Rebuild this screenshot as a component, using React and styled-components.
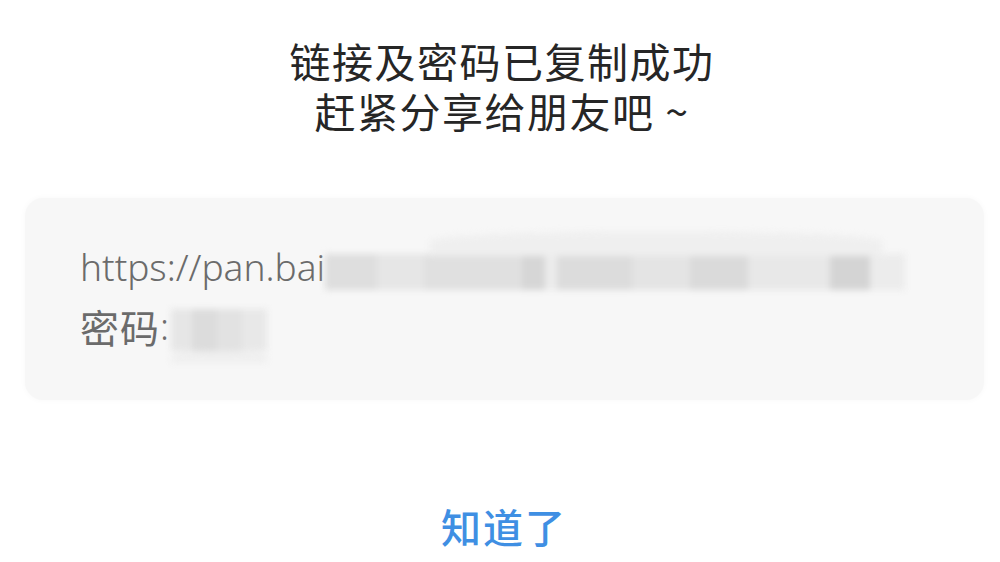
import React from "react";
import styled, { createGlobalStyle } from "styled-components";

const GlobalStyle = createGlobalStyle`
  html, body {
    margin: 0;
    padding: 0;
    background: #fff;
  }
  body {
    font-family: "Noto Sans CJK SC", "Noto Sans", sans-serif;
  }
`;

const App = () => {
  return (
    <Page>
      <GlobalStyle />
      <Title>
        <TitleLine>链接及密码已复制成功</TitleLine>
        <TitleLine>赶紧分享给朋友吧 ~</TitleLine>
      </Title>
      <Card>
        <Line>
          https://pan.bai
          <Redacted $w={580} $h={36} />
        </Line>
        <Line>
          <Cjk>密码</Cjk>:
          <Redacted $w={96} $h={42} $short />
        </Line>
      </Card>
      <OkButton>知道了</OkButton>
    </Page>
  );
};

export default App;

const Page = styled.div`
  width: 1000px;
  height: 562px;
  display: flex;
  flex-direction: column;
  align-items: center;
  padding-top: 35px;
  box-sizing: border-box;
  overflow: hidden;
  background: #fff;
`;

const Title = styled.div`
  display: flex;
  flex-direction: column;
  align-items: center;
  color: #262626;
`;

const TitleLine = styled.div`
  font-size: 41px;
  line-height: 50px;
  font-weight: 400;
  letter-spacing: 1.5px;
  padding-left: 4px;
  white-space: nowrap;
`;

const Card = styled.div`
  align-self: stretch;
  margin: 63px 16px 0 25px;
  height: 202px;
  box-sizing: border-box;
  padding: 39px 55px 0;
  background: #f7f7f7;
  border-radius: 18px;
  box-shadow: 0 0 6px rgba(0, 0, 0, 0.03);
`;

const Line = styled.div`
  display: flex;
  align-items: center;
  height: 59px;
  font-size: 37px;
  font-weight: 300;
  color: #6b6b6b;
  white-space: nowrap;
  font-family: "Noto Sans", "Noto Sans CJK SC", sans-serif;
`;

const Cjk = styled.span`
  font-family: "Noto Sans CJK SC", sans-serif;
  font-size: 39px;
  font-weight: 400;
  letter-spacing: 1px;
`;

const Redacted = styled.span`
  position: relative;
  display: inline-block;
  width: ${(p) => p.$w}px;
  height: ${(p) => p.$h}px;
  margin-left: ${(p) => (p.$short ? "2px" : "0")};
  margin-top: ${(p) => (p.$short ? "8px" : "10px")};
  filter: blur(3px);
  background: ${(p) =>
    p.$short
      ? "linear-gradient(90deg, #e6e6e6 0 22%, #dcdcdc 22% 48%, #e2e2e2 48% 74%, #e8e8e8 74% 100%)"
      : `linear-gradient(90deg,
          #dedede 0 9%, #e6e6e6 9% 17%, #e0e0e0 17% 34%, #d6d6d6 34% 38%,
          #ececec 38% 40%, #dcdcdc 40% 53%, #e4e4e4 53% 63%, #dadada 63% 73%,
          #e8e8e8 73% 87%, #d4d4d4 87% 94%, #ececec 94% 100%)`};

  &::before {
    content: "";
    position: absolute;
    left: ${(p) => (p.$short ? "0" : "18%")};
    right: ${(p) => (p.$short ? "0" : "4%")};
    top: ${(p) => (p.$short ? "100%" : "-22px")};
    height: ${(p) => (p.$short ? "12px" : "24px")};
    background: #efefef;
    border-radius: 40% 40% 0 0;
  }
`;

const OkButton = styled.div`
  margin-top: 101px;
  padding-left: 8px;
  font-size: 40px;
  line-height: 50px;
  font-weight: 500;
  color: #3f8fe3;
  letter-spacing: 2px;
  cursor: pointer;
`;
